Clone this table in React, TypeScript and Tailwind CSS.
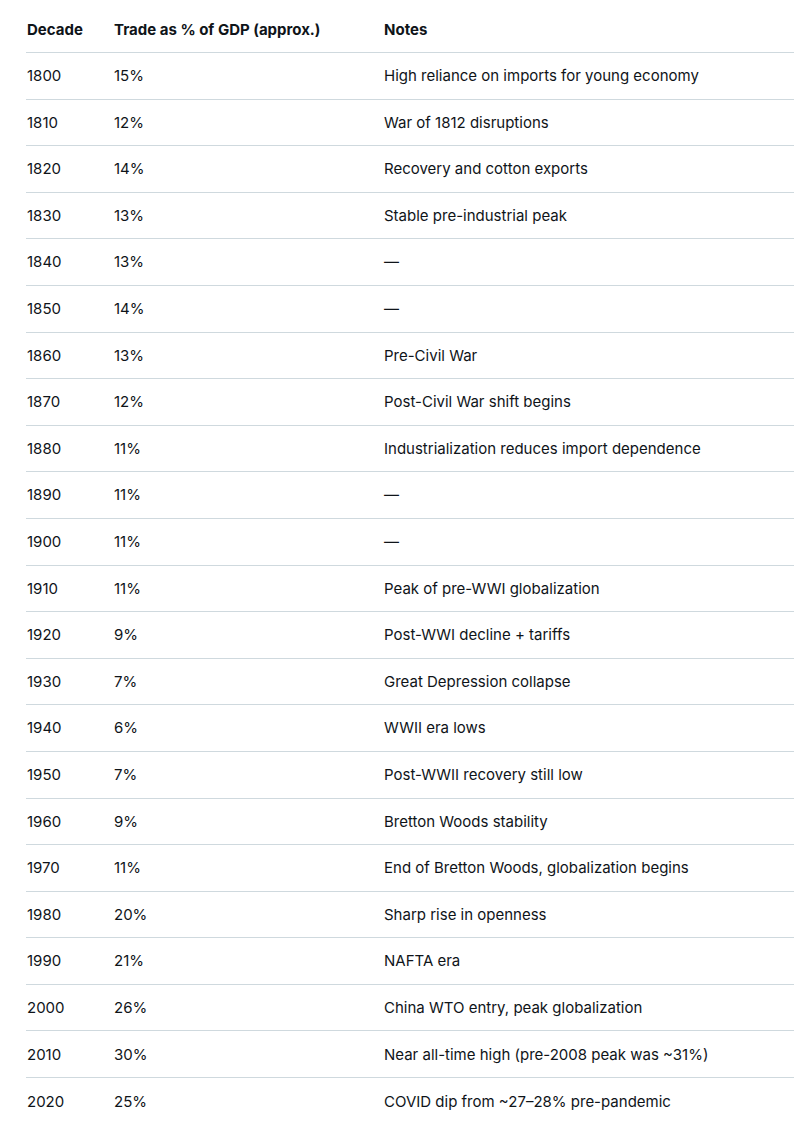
const rows: [string, string, string][] = [
  ["1800", "15%", "High reliance on imports for young economy"],
  ["1810", "12%", "War of 1812 disruptions"],
  ["1820", "14%", "Recovery and cotton exports"],
  ["1830", "13%", "Stable pre-industrial peak"],
  ["1840", "13%", "—"],
  ["1850", "14%", "—"],
  ["1860", "13%", "Pre-Civil War"],
  ["1870", "12%", "Post-Civil War shift begins"],
  ["1880", "11%", "Industrialization reduces import dependence"],
  ["1890", "11%", "—"],
  ["1900", "11%", "—"],
  ["1910", "11%", "Peak of pre-WWI globalization"],
  ["1920", "9%", "Post-WWI decline + tariffs"],
  ["1930", "7%", "Great Depression collapse"],
  ["1940", "6%", "WWII era lows"],
  ["1950", "7%", "Post-WWII recovery still low"],
  ["1960", "9%", "Bretton Woods stability"],
  ["1970", "11%", "End of Bretton Woods, globalization begins"],
  ["1980", "20%", "Sharp rise in openness"],
  ["1990", "21%", "NAFTA era"],
  ["2000", "26%", "China WTO entry, peak globalization"],
  ["2010", "30%", "Near all-time high (pre-2008 peak was ~31%)"],
  ["2020", "25%", "COVID dip from ~27–28% pre-pandemic"],
]

export default function App() {
  return (
    <div className="min-h-[1144px] bg-white pl-[26px] pr-[9px] pt-[6px] font-['Inter','Noto_Sans',sans-serif] text-[15px] text-[#0f1419]">
      {/* Header */}
      <div className="flex h-[47px] items-center border-b border-[#cfd9de] pt-[3px] font-bold">
        <div className="w-[88px] pl-px">Decade</div>
        <div className="w-[270px]">Trade as % of GDP (approx.)</div>
        <div className="flex-1">Notes</div>
      </div>

      {/* Rows */}
      {rows.map(([decade, trade, note], i) => (
        <div
          key={decade}
          className={
            i === rows.length - 1
              ? "flex h-[46.6px] items-center pt-px"
              : "flex h-[46.6px] items-center border-b border-[#cfd9de] pt-px"
          }
        >
          <div className="w-[88px] pl-px">{decade}</div>
          <div className="w-[270px]">{trade}</div>
          <div className="flex-1">{note}</div>
        </div>
      ))}
    </div>
  )
}
